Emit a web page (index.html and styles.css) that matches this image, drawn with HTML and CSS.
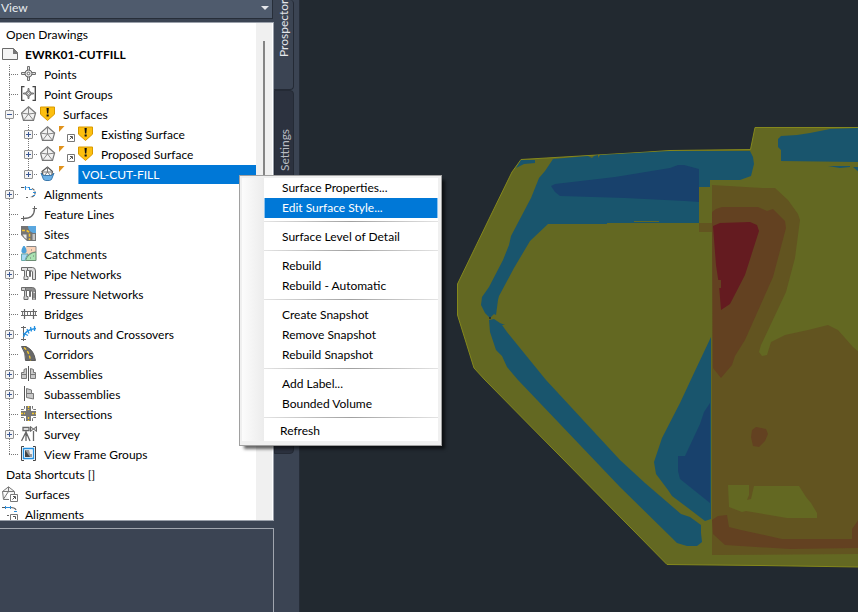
FILE: index.html
```
<!DOCTYPE html>
<html lang="en">
<head>
<meta charset="utf-8">
<title>EWRK01-CUTFILL</title>
<link rel="stylesheet" href="styles.css">
</head>
<body>
<svg class="symbols" aria-hidden="true">
  <symbol id="i-dwg" viewBox="0 0 16 16"><path d="M.5 2.500H11.500L15.500 6.500V13.500H.5Z" fill="#f4f4f4" stroke="#6a6a6a"/><path d="M11 2L16 7V8H11Z" fill="#777"/></symbol>
  <symbol id="i-point" viewBox="0 0 16 16"><path d="M6.500 .5H8.500V4L11 6.500H14.500V8.500H11L8.500 11V14.500H6.500V11L4 8.500H.5V6.500H4L6.500 4Z" fill="#e2e2e2" stroke="#707070"/><circle cx="7.500" cy="7.500" r="3.500" fill="#e8e8e8" stroke="#666"/><circle cx="7.500" cy="7.500" r="1.300" fill="#fff" stroke="#666"/></symbol>
  <symbol id="i-pgroup" viewBox="0 0 16 16"><path d="M3.500 .7H.7V14.300H3.500M11.500 .7H14.300V14.300H11.500" fill="none" stroke="#444" stroke-width="1.300"/><path d="M7 2.500H8V5L10 7H12.500V8H10L8 10V12.500H7V10L5 8H2.500V7H5L7 5Z" fill="#ccc" stroke="#707070"/><circle cx="7.500" cy="7.500" r="2.500" fill="#ddd" stroke="#666"/><circle cx="7.500" cy="7.500" r="1" fill="#fff" stroke="#666" stroke-width=".7"/></symbol>
  <symbol id="i-surface" viewBox="0 0 16 16"><path d="M7.500 .8L14.600 7L12.500 14.300H2.500L.5 7Z" fill="#f2f2f2" stroke="#777" stroke-width="1.200"/><path d="M7.500 1V8M7.500 8L1 7.200M7.500 8L14 7.200M7.500 8L2.800 14M7.500 8L12.300 14" fill="none" stroke="#888"/></symbol>
  <symbol id="i-warn" viewBox="0 0 16 16"><path d="M.5 1H14.500V8.200L7.500 14.500L.5 8.200Z" fill="#fdbf0f" stroke="#d99a00"/><path d="M6.500 2H8.800L8.300 7.500H7ZM6.600 8.600H8.700V10.600H6.600Z" fill="#111"/></symbol>
  <symbol id="i-volume" viewBox="0 0 16 16"><path d="M2 5.500L7.500 1L12.500 5.500L11.500 10.500H3.500Z" fill="#f8f8f8" stroke="#555" stroke-width="1.200"/><path d="M7.500 1V6L2 6M7.500 6H13M7.500 6L4 10M7.500 6L11 10" fill="none" stroke="#777"/><path d="M1 7L3.500 9.500H11.500L14 7L11.500 13.500L9.500 14.500H5.500L3.500 13.500Z" fill="#6bb0e6" stroke="#3a78ac"/></symbol>
  <symbol id="i-align" viewBox="0 0 16 16"><path d="M0 1.500H3" stroke="#555"/><path d="M3.500 1.500H8M9 3.500H12" stroke="#2a8bd8" stroke-dasharray="2 1"/><path d="M4.500 0V4M8.500 1V4" stroke="#2a8bd8"/><path d="M11 2.500Q14.500 4 14 7.500Q13 11 9 11" fill="none" stroke="#666" stroke-width="1.200" stroke-dasharray="3 1.200"/><path d="M12 6.500H15M12 9.500H14" stroke="#2a8bd8"/><path d="M5 11.500H7" stroke="#666"/></symbol>
  <symbol id="i-feature" viewBox="0 0 16 16"><path d="M0 12.500H5M2.500 10V15M11.500 2.500H16M13.500 0V5" stroke="#666"/><path d="M2.500 12.500Q13.500 12.500 13.500 2.500" fill="none" stroke="#666" stroke-width="1.300"/></symbol>
  <symbol id="i-site" viewBox="0 0 16 16"><path d="M0 0H15V15H6L0 9Z" fill="#747474"/><path d="M7 0H15V7H12Q7 5 7 0Z" fill="#5aa7df"/><path d="M1 8H6V14Q2 12 1 8Z" fill="#e9e9e9" stroke="#777"/><path d="M1 4.500H5Q8.500 5 8.500 9V14" fill="none" stroke="#f2c230" stroke-width="1.600" stroke-dasharray="3 1.500"/><path d="M11.500 8H14V14H11.500Z" fill="#c4c4c4"/></symbol>
  <symbol id="i-catch" viewBox="0 0 16 16"><path d="M5.500 .5H15V6Q8 6 4 13H.5V8" fill="#fbd3b8" stroke="#888"/><path d="M15 6Q7 7 4.500 14.500H15Z" fill="#a9e3b2" stroke="#6c8d73"/><path d="M.5 8H7Q5 11 4 14.500H.5Z" fill="#a8d8f4" stroke="#6aa"/><path d="M3 -1Q6 3 5.500 6Q3 9 .5 6Q0 3 3 -1Z" fill="#4a9fd8"/><path d="M10 4h1M12 10h1M9 12h1" stroke="#777"/></symbol>
  <symbol id="i-pipe" viewBox="0 0 16 16"><path d="M.5 1.500H6.500V4.500H5.500V10.500H7V13.500H3V10.500H3.500V4.500H.5Z" fill="#e2e2e2" stroke="#6b6b6b"/><path d="M6.500 1.500H11.500Q14.500 1.500 14.500 5V13.500H11.500V6Q11 4.500 9.500 4.500V10.500H8.500V4.500H6.500Z" fill="#dedede" stroke="#6b6b6b"/></symbol>
  <symbol id="i-press" viewBox="0 0 16 16"><path d="M.5 1.500H6.500V4.500H5.500V10.500H7V13.500H3V10.500H3.500V4.500H.5Z" fill="#d0d0d0" stroke="#6b6b6b"/><path d="M4.500 1.500H11.500Q14.500 1.500 14.500 5V13.500H11.500V6Q11 4.500 9.500 4.500V10.500H8.500V4.500H4.500Z" fill="#8d8d8d" stroke="#6b6b6b"/><path d="M12.500 6.500H14M12 13H14" stroke="#ddd"/></symbol>
  <symbol id="i-bridge" viewBox="0 0 16 16"><path d="M0 5.500H16M0 9.500H16M3.500 3V13M12.500 3V13" stroke="#666" stroke-width="1.200"/><path d="M1.500 5.500V9.500M6.500 5.500V9.500M9.500 5.500V9.500M14.500 5.500V9.500" stroke="#777"/></symbol>
  <symbol id="i-turn" viewBox="0 0 16 16"><path d="M2.500 0V15M0 1.500H5M0 13.500H5" stroke="#666"/><path d="M2.500 11Q4 3.500 15 2.500" fill="none" stroke="#2490e0" stroke-width="1.500"/><path d="M2 7L7 9.500M6 3L8 7.500M9.500 1L10.500 5.500M13.500 0V5" stroke="#2490e0" stroke-width="1.300"/></symbol>
  <symbol id="i-corr" viewBox="0 0 16 16"><path d="M.5 .5H5Q13 4 14.500 14.500H4.500Q5 7 .5 .5Z" fill="#696969" stroke="#5a5a5a"/><path d="M3 1.500Q8.500 6 9.500 15" fill="none" stroke="#f3c72d" stroke-width="1.400" stroke-dasharray="3 2"/></symbol>
  <symbol id="i-asm" viewBox="0 0 16 16"><path d="M7.500 0V15" stroke="#555"/><path d="M5.500 2.500L3 3.500V6.500H.5V12.500H5.500ZM9.500 2.500L12.500 3.500V6.500H14.500V12.500H9.500Z" fill="#c9c9c9" stroke="#777"/><path d="M1 8.500H5M10 8.500H14" stroke="#777"/></symbol>
  <symbol id="i-sub" viewBox="0 0 16 16"><path d="M3.500 0V15" stroke="#555"/><path d="M5.500 2.500L10.500 4V7.500H12.500V13L5.500 11.500Z" fill="#c9c9c9" stroke="#777"/><path d="M6 7.500H10.500" stroke="#777"/></symbol>
  <symbol id="i-inter" viewBox="0 0 16 16"><path d="M5 0H10V5H15V10H10V15H5V10H0V5H5Z" fill="#777"/><path d="M7.500 0V4M7.500 11V15M0 7.500H4M11 7.500H15" stroke="#f3c72d" stroke-width="1.300" stroke-dasharray="2 1"/><path d="M0 3.500H2.500L3.500 2.500V0M11.500 0V2.500L12.500 3.500H15M0 11.500H2.500L3.500 12.500V15M11.500 15V12.500L12.500 11.500H15" fill="none" stroke="#777"/></symbol>
  <symbol id="i-survey" viewBox="0 0 16 16"><path d="M2 1.500H8V4.500H2ZM5 4.500V8M5 6L.5 15M5 6L9 15M5 7V15M12.500 5V15" fill="none" stroke="#666" stroke-width="1.300"/><path d="M9.500 .5L15.500 5.500V.5L9.500 5.500Z" fill="#ccc" stroke="#666"/></symbol>
  <symbol id="i-frame" viewBox="0 0 16 16"><path d="M3 .5H.5V14.500H3M12 .5H14.500V14.500H12" fill="none" stroke="#444"/><path d="M2.500 2.500H12.500V12.500H2.500Z" fill="#fff" stroke="#2490e0" stroke-width="1.400"/><path d="M4 4H11V11H4Z" fill="#999"/><path d="M4 4L9 11H4Z" fill="#444"/><path d="M8 4H11V8H9Z" fill="#eee"/></symbol>
  <symbol id="i-flag" viewBox="0 0 6 16"><path d="M0 0H5.500L0 6Z" fill="#e0921c"/></symbol>
  <symbol id="i-link" viewBox="0 0 8 16"><path d="M.5 7.500H7.500V14.500H.5Z" fill="#fff" stroke="#777"/><path d="M2.500 12.500L5 10M3 9.500H5.500V12" fill="none" stroke="#555"/></symbol>
  <symbol id="i-ssurf" viewBox="0 0 16 16"><path d="M.5 5.500L6.500 .8L12.500 5.500V8M.5 5.500L1.500 13.500H7M.5 5.500H12M6.500 1V5.500L1.500 13" fill="#f2f2f2" stroke="#777"/><path d="M8.500 8.500H15.500V15.500H8.500Z" fill="#fff" stroke="#777"/><path d="M10.500 13.500L13 11M11 10.500H13.500V13" fill="none" stroke="#555"/></symbol>
  <symbol id="i-salign" viewBox="0 0 16 16"><path d="M0 1.500H3" stroke="#555"/><path d="M4 1.500H8M12 5.500H15" stroke="#2a8bd8" stroke-width="1.200"/><path d="M3.500 0V3M8.500 0V3" stroke="#2a8bd8"/><path d="M9 1.500Q13 1.500 14 4M5 9.500H7" fill="none" stroke="#666" stroke-width="1.200"/><path d="M8.500 8.500H15.500V15.500H8.500Z" fill="#fff" stroke="#777"/><path d="M11 10.500H13.500V13" fill="none" stroke="#555"/></symbol>
</svg>

<main class="app">
  <section class="palette">
    <div class="panel">
      <header class="view-bar"><span>View</span><button class="drop" aria-label="Change view"></button></header>
      <div class="tree-box">
        <ul class="tree">
          <li><div class="row heading">Open Drawings</div></li>
          <li><div class="row root"><svg class="icon"><use href="#i-dwg"/></svg><b>EWRK01-CUTFILL</b></div>
            <ul>
              <li><div class="row"><i class="guide"></i><svg class="icon"><use href="#i-point"/></svg>Points</div></li>
              <li><div class="row"><i class="guide"></i><svg class="icon"><use href="#i-pgroup"/></svg>Point Groups</div></li>
              <li><div class="row"><i class="guide"><button class="toggle open" aria-label="Collapse"></button></i><svg class="icon"><use href="#i-surface"/></svg><svg class="icon status"><use href="#i-warn"/></svg>Surfaces</div>
                <ul>
                  <li><div class="row"><i class="guide pass"></i><i class="guide"><button class="toggle" aria-label="Expand"></button></i><svg class="icon"><use href="#i-surface"/></svg><svg class="flag"><use href="#i-flag"/></svg><svg class="link"><use href="#i-link"/></svg><svg class="icon status"><use href="#i-warn"/></svg>Existing Surface</div></li>
                  <li><div class="row"><i class="guide pass"></i><i class="guide"><button class="toggle" aria-label="Expand"></button></i><svg class="icon"><use href="#i-surface"/></svg><svg class="flag"><use href="#i-flag"/></svg><svg class="link"><use href="#i-link"/></svg><svg class="icon status"><use href="#i-warn"/></svg>Proposed Surface</div></li>
                  <li><div class="row"><i class="guide pass"></i><i class="guide last"><button class="toggle" aria-label="Expand"></button></i><svg class="icon"><use href="#i-volume"/></svg><svg class="flag"><use href="#i-flag"/></svg><span class="selected">VOL-CUT-FILL</span></div></li>
                </ul></li>
              <li><div class="row"><i class="guide"><button class="toggle" aria-label="Expand"></button></i><svg class="icon"><use href="#i-align"/></svg>Alignments</div></li>
              <li><div class="row"><i class="guide"></i><svg class="icon"><use href="#i-feature"/></svg>Feature Lines</div></li>
              <li><div class="row"><i class="guide"></i><svg class="icon"><use href="#i-site"/></svg>Sites</div></li>
              <li><div class="row"><i class="guide"></i><svg class="icon"><use href="#i-catch"/></svg>Catchments</div></li>
              <li><div class="row"><i class="guide"><button class="toggle" aria-label="Expand"></button></i><svg class="icon"><use href="#i-pipe"/></svg>Pipe Networks</div></li>
              <li><div class="row"><i class="guide"></i><svg class="icon"><use href="#i-press"/></svg>Pressure Networks</div></li>
              <li><div class="row"><i class="guide"></i><svg class="icon"><use href="#i-bridge"/></svg>Bridges</div></li>
              <li><div class="row"><i class="guide"><button class="toggle" aria-label="Expand"></button></i><svg class="icon"><use href="#i-turn"/></svg>Turnouts and Crossovers</div></li>
              <li><div class="row"><i class="guide"></i><svg class="icon"><use href="#i-corr"/></svg>Corridors</div></li>
              <li><div class="row"><i class="guide"><button class="toggle" aria-label="Expand"></button></i><svg class="icon"><use href="#i-asm"/></svg>Assemblies</div></li>
              <li><div class="row"><i class="guide"><button class="toggle" aria-label="Expand"></button></i><svg class="icon"><use href="#i-sub"/></svg>Subassemblies</div></li>
              <li><div class="row"><i class="guide"></i><svg class="icon"><use href="#i-inter"/></svg>Intersections</div></li>
              <li><div class="row"><i class="guide"><button class="toggle" aria-label="Expand"></button></i><svg class="icon"><use href="#i-survey"/></svg>Survey</div></li>
              <li><div class="row"><i class="guide last"></i><svg class="icon"><use href="#i-frame"/></svg>View Frame Groups</div></li>
            </ul></li>
          <li><div class="row heading">Data Shortcuts []</div>
            <ul>
              <li><div class="row root"><svg class="icon"><use href="#i-ssurf"/></svg>Surfaces</div></li>
              <li><div class="row root"><svg class="icon"><use href="#i-salign"/></svg>Alignments</div></li>
            </ul></li>
        </ul>
        <div class="scrollbar"><div class="thumb"></div></div>
      </div>
      <div class="preview"></div>
    </div>
    <nav class="tabs">
      <button class="tab active">Prospector</button>
      <button class="tab">Settings</button>
    </nav>
  </section>

  <section class="canvas">
    <svg class="drawing" viewBox="300 0 558 612" preserveAspectRatio="xMinYMin meet" role="img" aria-label="Cut and fill volume surface">
      <path class="olive edge" d="M457.500 284L490 217L512 172L521 159.500L640 152.500L670 150.500L750.500 149.500L755 127.500H859V567L760 565.500L667 564.500L485 380L474 368L457.500 315Z"/>
      <path class="teal" d="M553 159L545 171L539 178L531 198L511 236L509 245L503 260L489 287L482 297L481 305L485 313L490 318L494 314L496 315L498 300L499 296L514 268L530 241L548 224H607V223H699V187H710V180H740L751 176L754 164L753 157L750 151H670L600 155L598 158V155L594 156L592 158L588 156Z"/>
      <path class="teal" d="M521 160H535V163L524 164L516 168ZM489 320L494 319L500 323L505 325L502 325L507 332L546 380L620 460L645 483L681 514L690 517L701 525V533L702 542L697 546H687L677 543L672 538L620 487L518 380L507 367L502 356L496 350L490 332Z"/>
      <path class="teal" d="M711 337L694 373L680 403L662 438L654 462L656 474L668 490L672 496L688 508L705 521L711 519ZM778 139L781 136L797 135L810 133L830 129L859 128V162L781 161V150L778 147ZM828 166H850V167L840 168ZM853 167H859V172Z"/>
      <path class="olive" d="M787 162H827V163H787ZM634 221H659V222H634Z"/>
      <path class="blue" d="M551 186L555 184L615 177L670 168L678 165L684 165L699 169V202L685 201L625 198L560 196L555 192Z"/>
      <path class="blue" d="M710 403L704 412L700 424L685 456H678V471L680 479L710 503Z"/>
      <path class="brown" d="M712 185L762 188L775 188L788 200L798 214L800 220L795 258L786 292L770 326L761 345L759 352L762 356L767 355L771 342L785 335L808 330L828 325L838 330L853 347L859 352V554L712 555ZM699 223H712V232H699Z"/>
      <path class="rust" d="M712 212L716 209L722 207H758L767 211L773 209L785 221L786 228L773 277L745 340L735 356L732 365L721 378L713 368Z"/>
      <path class="red" d="M713 226L720 223L750 222L757 225L759 231L745 275L730 304L721 310L719 285L716 265Z"/>
      <path class="rust" d="M717 280H721V288H717ZM752 430L756 427L766 429L768 434L765 441L759 447L753 446L751 437ZM712 520L718 516L727 515L729 527L741 530L782 539H852V529L859 519V548L790 549L725 545L713 534Z"/>
      <path class="olive" d="M728 485H749V495L747 500L751 499L754 486H799L806 497L811 503L817 513V518H787L746 511L742 512L729 507Z"/>
      <path class="seam" d="M711.500 330V520"/>
      <circle class="gap" cx="490" cy="318" r="1"/>
    </svg>
  </section>

  <div class="menu" role="menu">
    <button role="menuitem">Surface Properties...</button>
    <button role="menuitem" class="current">Edit Surface Style...</button>
    <hr>
    <button role="menuitem">Surface Level of Detail</button>
    <hr>
    <button role="menuitem">Rebuild</button>
    <button role="menuitem">Rebuild - Automatic</button>
    <hr>
    <button role="menuitem">Create Snapshot</button>
    <button role="menuitem">Remove Snapshot</button>
    <button role="menuitem">Rebuild Snapshot</button>
    <hr>
    <button role="menuitem">Add Label...</button>
    <button role="menuitem">Bounded Volume</button>
    <hr>
    <button role="menuitem">Refresh</button>
  </div>
</main>
</body>
</html>
```
FILE: styles.css
```
* { box-sizing: border-box; }
body {
  margin: 0;
  font: 12px/20px Lato, "Open Sans", sans-serif;
  color: #000;
  background: #222930;
}
button { font: inherit; color: inherit; border: 0; padding: 0; background: none; }
ul { list-style: none; margin: 0; padding: 0; }
.symbols { position: absolute; width: 0; height: 0; }

.app { display: flex; height: 100vh; position: relative; overflow: hidden; }
.palette { display: flex; flex: none; background: #3b4453; border-right: 1px solid #262d38; }
.panel { width: 274px; display: flex; flex-direction: column; }

.view-bar {
  display: flex;
  align-items: center;
  justify-content: space-between;
  height: 19px;
  margin-right: 1px;
  padding: 0 3px 2px 1px;
  color: #e8ebef;
  background: #4f5b6d;
  border-right: 1px solid #272e39;
  border-bottom: 1px solid #272e39;
}
.drop { border: 4px solid transparent; border-top-color: #e4e6ea; border-bottom: 0; }

.tree-box {
  flex: 1;
  min-height: 0;
  display: flex;
  margin-top: 3px;
  border: 1px solid #9aa0aa;
  border-left: 0;
  background: #fff;
  overflow: hidden;
}
.tree { flex: 1; padding-top: 2px; }
.row { display: flex; align-items: center; height: 20px; white-space: nowrap; }
.heading { padding-left: 6px; }
.root { padding-left: 2px; }
.icon { flex: none; width: 16px; height: 16px; margin: 0 7px 2px 2px; }
.root .icon { margin-left: 0; }
.status { margin: 0 7px 2px -4px; }
.flag { flex: none; width: 6px; height: 16px; margin: 0 0 2px -4px; }
.link { flex: none; width: 8px; height: 16px; margin: 0 7px 0 2px; }
.guide {
  flex: none;
  display: flex;
  align-items: center;
  width: 19px;
  height: 20px;
  padding: 0 0 2px 5px;
  background:
    repeating-linear-gradient(#777 0 1px, transparent 1px 2px) 9px 0 / 1px 100% no-repeat,
    repeating-linear-gradient(90deg, #777 0 1px, transparent 1px 2px) 9px 9px / 9px 1px no-repeat;
}
.guide.last { background-size: 1px 50%, 9px 1px; }
.guide.pass { background-size: 1px 100%, 0 0; }
.toggle {
  width: 9px;
  height: 9px;
  border: 1px solid #919191;
  border-radius: 1px;
  background:
    linear-gradient(#3a5795, #3a5795) center / 5px 1px no-repeat,
    linear-gradient(#3a5795, #3a5795) center / 1px 5px no-repeat,
    #f4f4f4;
}
.toggle.open { background: linear-gradient(#3a5795, #3a5795) center / 5px 1px no-repeat, #f4f4f4; }
.selected {
  flex: 1;
  align-self: stretch;
  margin: 0 0 1px 13px;
  padding-left: 3px;
  line-height: 20px;
  color: #fff;
  background: #0078d7;
  border-left: 1px solid #66aee7;
}

.scrollbar { width: 17px; background: #f0f0f0; border-right: 1px solid #fff; padding: 18px 0 0 7px; }
.thumb { width: 2px; height: 240px; background: #858585; }
.preview { flex: none; height: 84px; margin-top: 7px; border: 1px solid #a0a5ae; border-width: 1px 1px 0 0; }

.tabs { display: flex; flex-direction: column; width: 25px; padding-right: 5px; }
.tab {
  height: 364px;
  writing-mode: vertical-rl;
  transform: rotate(180deg);
  padding-bottom: 38px;
  text-align: right;
  color: #b9bdc4;
  background: #2c323f;
  border: 1px solid #242a35;
  border-radius: 4px 0 0 4px;
}
.tab.active { height: 90px; padding: 32px 0 0; text-align: left; color: #e4e6ea; background: #3b4453; border-width: 1px 0 0 1px; }

.canvas { flex: 1; min-width: 0; overflow: hidden; }
.drawing { display: block; width: 100%; height: 100%; }
.olive { fill: #636822; }
.edge { stroke: #85881c; }
.teal { fill: #19556d; }
.blue { fill: #18416c; }
.brown { fill: #625420; }
.rust { fill: #634121; }
.red { fill: #641b20; }
.seam { stroke: #636822; }
.gap { fill: #222930; }

.menu {
  position: absolute;
  left: 239px;
  top: 175px;
  width: 203px;
  display: flex;
  flex-direction: column;
  padding: 2px 3px 4px 24px;
  background: linear-gradient(90deg, #fcfcfc, #ececec) 2px 2px / 22px calc(100% - 6px) no-repeat, #f0f0f0;
  border: 1px solid #a0a0a0;
  box-shadow: 4px 4px 3px -1px rgba(0, 0, 0, .6);
}
.menu button { height: 20px; padding-left: 18px; text-align: left; background: #fff; }
.menu .current { color: #fff; background: #0078d7; border: solid #8cc2ee; border-width: 0 1px; padding-left: 17px; }
.menu hr {
  margin: 0;
  border: 0;
  height: 9px;
  background: linear-gradient(90deg, #e4e4e4, #a0a0a0, #e4e4e4) 0 3px / 100% 1px no-repeat, #fff;
}
.menu hr:last-of-type { height: 7px; }
.menu button:last-child { padding-left: 16px; }
```
